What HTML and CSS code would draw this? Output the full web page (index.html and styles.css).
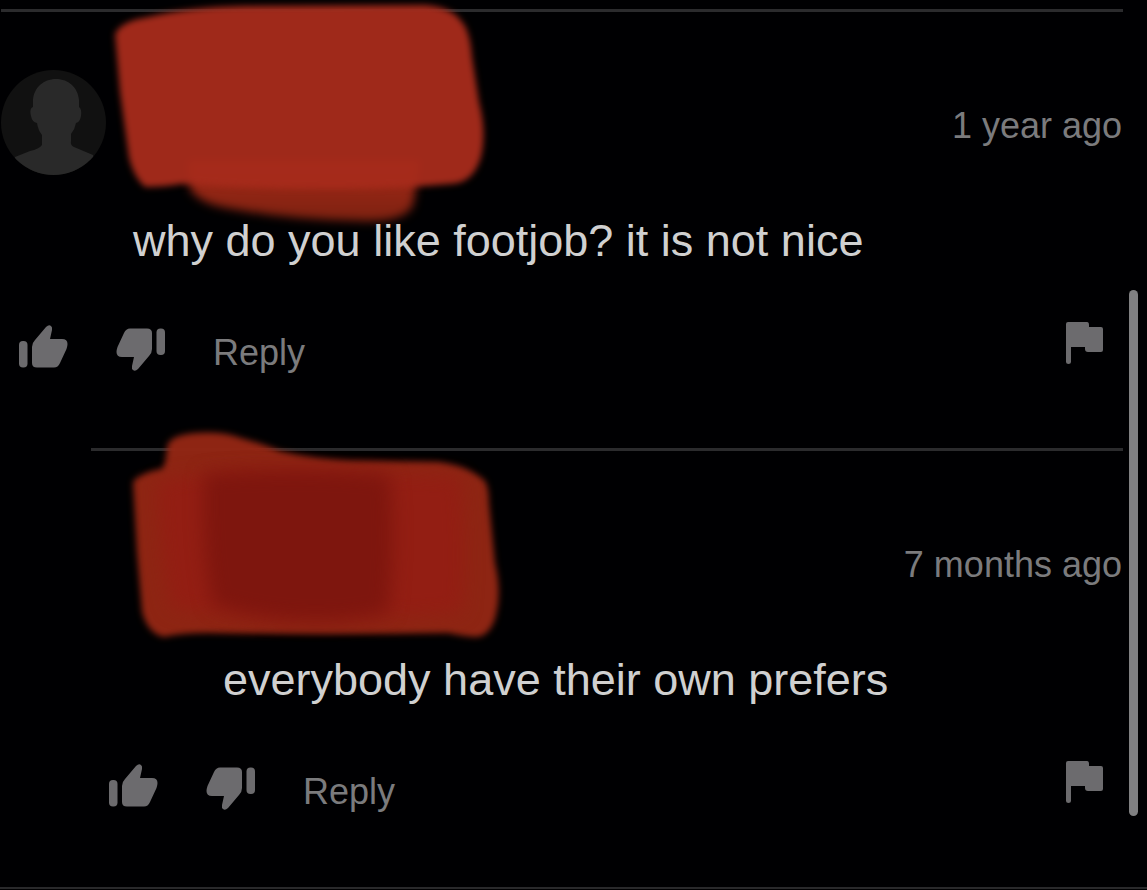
FILE: index.html
```
<!DOCTYPE html>
<html lang="en">
<head>
    <meta charset="UTF-8">
    <meta name="viewport" content="width=device-width, initial-scale=1.0">
    <title>Comments</title>
    <link rel="stylesheet" href="styles.css">
</head>
<body>

<!-- shared icons -->
<svg class="sprite" aria-hidden="true">
    <symbol id="thumb" viewBox="0 0 49 52">
        <rect x="0" y="19" width="8.500" height="26.500" rx="4"/>
        <path d="M13 25Q13 21 16 18L27 5Q30 2 32 4Q33.500 5 33 8L31 17H43Q48.500 17 48.500 22Q48.500 24 47.500 27L41 41Q39 45.500 35 45.500H18Q13 45.500 13 41Z"/>
    </symbol>
    <symbol id="flag" viewBox="0 0 38 43">
        <path d="M0 2Q0 0 2 0H21Q23 0 23 3V5H35Q37 5 37 7V28Q37 30 35 30H22Q19 30 19 27V25H5V40Q5 42 2.500 42Q0 42 0 40Z"/>
    </symbol>
</svg>

<main class="comments">
    <article class="comment">
        <svg class="scribble" viewBox="108 0 390 230" aria-hidden="true">
            <linearGradient id="tailFade" x1="0" y1="0" x2="0" y2="1">
                <stop offset="0" stop-color="#a52b1b"/>
                <stop offset="0.300" stop-color="#9a2716"/>
                <stop offset="1" stop-color="#7c2110"/>
            </linearGradient>
            <path class="tail" d="M187 160L190 189Q199 203 226 208Q290 220 360 221Q405 223 413 205L421 160Z"/>
            <path class="stroke" d="M115 34Q121 21 148 17Q190 7 245 6L425 5Q452 7 462 22Q470 31 472 57L479 102Q487 133 481 157Q473 184 450 184L425 186Q300 192 195 184L181 184Q165 187 145 187Q134 178 129 158L120 92Z"/>
        </svg>
        <div class="comment-header">
            <svg class="avatar" viewBox="0 0 105 105" role="img" aria-label="User avatar">
                <clipPath id="round"><circle cx="52.500" cy="52.500" r="52.500"/></clipPath>
                <circle class="avatar-back" cx="52.500" cy="52.500" r="52.500"/>
                <path class="avatar-person" clip-path="url(#round)" d="M55 9C42 9 33 18 32 30V37C29 38 29 42 30 46Q31 52 36 53Q37 60 41 65V75Q38 79 29 81L14 87L10 105H96L92 85L73 77Q69 75 70 71V64Q74 59 75 53Q79 52 80 46Q81 39 78 37V30C77 18 68 9 55 9Z"/>
            </svg>
            <time class="date">1 year ago</time>
        </div>
        <p class="text">why do you like footjob? it is not nice</p>
        <div class="actions">
            <button type="button" aria-label="Like"><svg class="thumb"><use href="#thumb"/></svg></button>
            <button type="button" aria-label="Dislike"><svg class="thumb down"><use href="#thumb"/></svg></button>
            <button type="button" class="reply-btn">Reply</button>
            <button type="button" class="flag-btn" aria-label="Report"><svg class="flag"><use href="#flag"/></svg></button>
        </div>
    </article>

    <article class="comment reply">
        <svg class="scribble" viewBox="124 424 390 220" aria-hidden="true">
            <path class="stroke second" d="M133 482Q139 473 162 469Q166 464 167 447Q169 435 195 433Q222 431 241 438Q263 444 280 451Q312 459 350 461L438 462Q469 466 485 481Q489 488 489 503L495 563Q502 592 496 615Q491 635 477 637Q467 637 448 633Q330 635 208 633Q181 633 164 637Q148 634 142 612L137 553Z"/>
            <path class="middle" d="M158 482Q250 462 460 477Q468 550 462 612Q300 628 172 608Q160 560 158 482Z"/>
            <path class="inner" d="M204 474Q300 466 390 475Q396 545 388 613Q300 632 213 605Q201 550 204 474Z"/>
        </svg>
        <div class="comment-header">
            <time class="date">7 months ago</time>
        </div>
        <p class="text">everybody have their own prefers</p>
        <div class="actions">
            <button type="button" aria-label="Like"><svg class="thumb"><use href="#thumb"/></svg></button>
            <button type="button" aria-label="Dislike"><svg class="thumb down"><use href="#thumb"/></svg></button>
            <button type="button" class="reply-btn">Reply</button>
            <button type="button" class="flag-btn" aria-label="Report"><svg class="flag"><use href="#flag"/></svg></button>
        </div>
    </article>
</main>

<div class="scroll-thumb"></div>

</body>
</html>
```
FILE: styles.css
```
body {
    margin: 0;
    background-color: #000002;
    color: #d0d0d0;
    font-family: "Liberation Sans", Arial, sans-serif;
}
.sprite {
    position: absolute;
    width: 0;
    height: 0;
}
.comments {
    padding: 9px 24px 0 1px;
    border-bottom: 2px solid #29292b;
}
.comment {
    position: relative;
    padding: 58px 0 64px;
    border-top: 3px solid #2b2b2d;
}
.reply {
    margin-left: 90px;
}
.comment-header {
    display: flex;
    align-items: center;
    height: 112px;
    margin-bottom: 29px;
}
.avatar {
    align-self: flex-start;
    width: 105px;
    height: 105px;
}
.avatar-back {
    fill: #111111;
}
.avatar-person {
    fill: #292929;
}
.date {
    margin-left: auto;
    padding-right: 1px;
    color: #7b7b7d;
    font-size: 36px;
}
.text {
    position: relative;
    margin: 0 0 51px;
    padding-left: 132px;
    font-size: 45px;
    line-height: 60px;
}
.actions {
    display: flex;
    align-items: flex-start;
    gap: 48px;
    padding: 0 19px 0 18px;
}
button {
    padding: 0;
    border: none;
    background: none;
    color: #7b7b7d;
    font-family: inherit;
    font-size: 36px;
    cursor: pointer;
}
button svg {
    display: block;
    fill: #6c6b6e;
}
.thumb {
    width: 49px;
    height: 52px;
}
.down {
    transform: rotate(180deg);
}
.reply-btn {
    line-height: 62px;
}
.flag-btn {
    margin-left: auto;
}
.flag {
    width: 38px;
    height: 43px;
}
/* brush marks over the user names */
.scribble {
    position: absolute;
    top: -12px;
    left: 107px;
    width: 390px;
    height: 230px;
    overflow: visible;
    pointer-events: none;
}
.reply .scribble {
    top: -27px;
    left: 33px;
    height: 220px;
}
.stroke {
    fill: #a52b1b;
    fill-opacity: 0.96;
    filter: blur(3px);
}
.tail {
    fill: url(#tailFade);
    filter: blur(5px);
}
.second {
    fill: #942614;
}
.middle {
    fill: #931e13;
    filter: blur(9px);
}
.inner {
    fill: #7e160e;
    filter: blur(9px);
}
.scroll-thumb {
    position: fixed;
    top: 290px;
    right: 9px;
    width: 9px;
    height: 526px;
    border-radius: 5px;
    background-color: #808082;
}
```
